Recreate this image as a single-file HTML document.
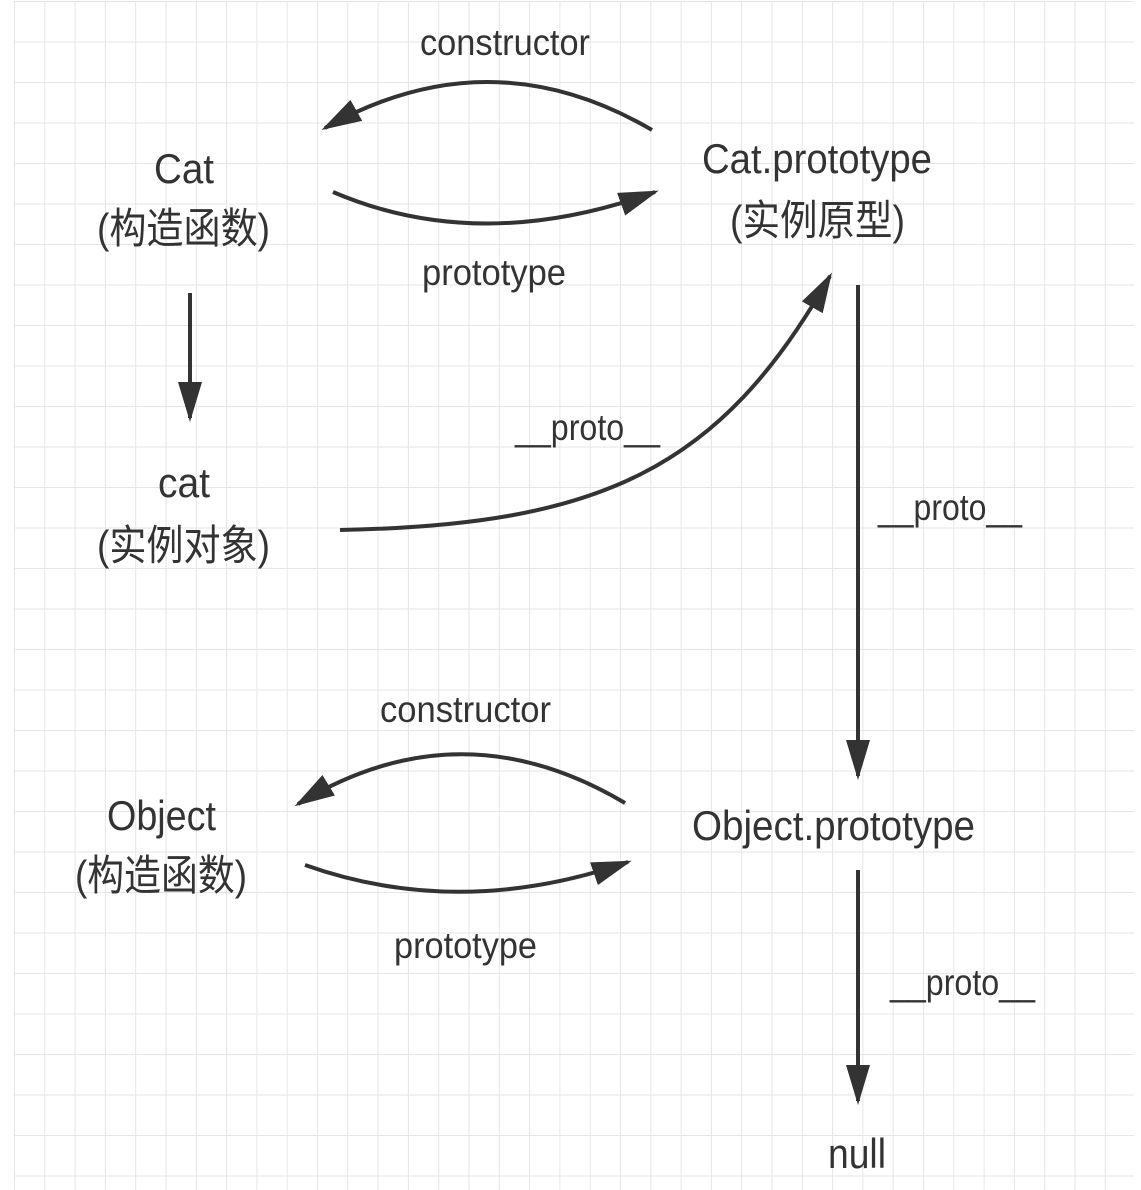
<html><head><style>body{margin:0;background:#fff}svg{display:block}text{font-family:"Liberation Sans","Noto Sans CJK SC",sans-serif;fill:#333}</style></head><body>
<svg width="1141" height="1190" xmlns="http://www.w3.org/2000/svg">
<defs>
<pattern id="g" x="14" y="1" width="30.3" height="40.5" patternUnits="userSpaceOnUse">
<path d="M0 0V40.5M0 0H30.3" stroke="#e6e6e6" stroke-width="2" fill="none"/>
</pattern>
<marker id="a" markerWidth="10" markerHeight="6" refX="9" refY="3" orient="auto" markerUnits="strokeWidth">
<path d="M0 0L10 3L0 6z" fill="#333"/></marker>
</defs>
<rect x="14" y="1" width="1120" height="1189" fill="url(#g)"/>
<g stroke="#333" stroke-width="4" fill="none" marker-end="url(#a)">
<path d="M652 130Q490 35 325 128"/>
<path d="M333 192Q480 255 655 192"/>
<path d="M190 293V418"/>
<path d="M340 530C600 525 720 470 830 276"/>
<path d="M858 285V776"/>
<path d="M625 803Q460 705 298 804"/>
<path d="M305 865Q460 920 628 862"/>
<path d="M858 870V1101"/>
</g>
<g font-size="42" lengthAdjust="spacingAndGlyphs">
<text x="420" y="55" textLength="170" font-size="37" lengthAdjust="spacingAndGlyphs">constructor</text>
<text x="154" y="183" textLength="60" lengthAdjust="spacingAndGlyphs">Cat</text>
<text x="97" y="243" textLength="173" lengthAdjust="spacingAndGlyphs">(构造函数)</text>
<text x="702" y="173" textLength="230" lengthAdjust="spacingAndGlyphs">Cat.prototype</text>
<text x="730" y="235" textLength="175" lengthAdjust="spacingAndGlyphs">(实例原型)</text>
<text x="422" y="285" textLength="144" font-size="37" lengthAdjust="spacingAndGlyphs">prototype</text>
<text x="515" y="440" textLength="145" font-size="37" lengthAdjust="spacingAndGlyphs">__proto__</text>
<text x="158" y="497" textLength="52" lengthAdjust="spacingAndGlyphs">cat</text>
<text x="97" y="560" textLength="173" lengthAdjust="spacingAndGlyphs">(实例对象)</text>
<text x="878" y="520" textLength="144" font-size="37" lengthAdjust="spacingAndGlyphs">__proto__</text>
<text x="380" y="722" textLength="171" font-size="37" lengthAdjust="spacingAndGlyphs">constructor</text>
<text x="107" y="830" textLength="109" lengthAdjust="spacingAndGlyphs">Object</text>
<text x="75" y="890" textLength="172" lengthAdjust="spacingAndGlyphs">(构造函数)</text>
<text x="692" y="840" textLength="283" lengthAdjust="spacingAndGlyphs">Object.prototype</text>
<text x="394" y="958" textLength="143" font-size="37" lengthAdjust="spacingAndGlyphs">prototype</text>
<text x="890" y="995" textLength="145" font-size="37" lengthAdjust="spacingAndGlyphs">__proto__</text>
<text x="828" y="1168" textLength="58" lengthAdjust="spacingAndGlyphs">null</text>
</g>
</svg>
</body></html>
